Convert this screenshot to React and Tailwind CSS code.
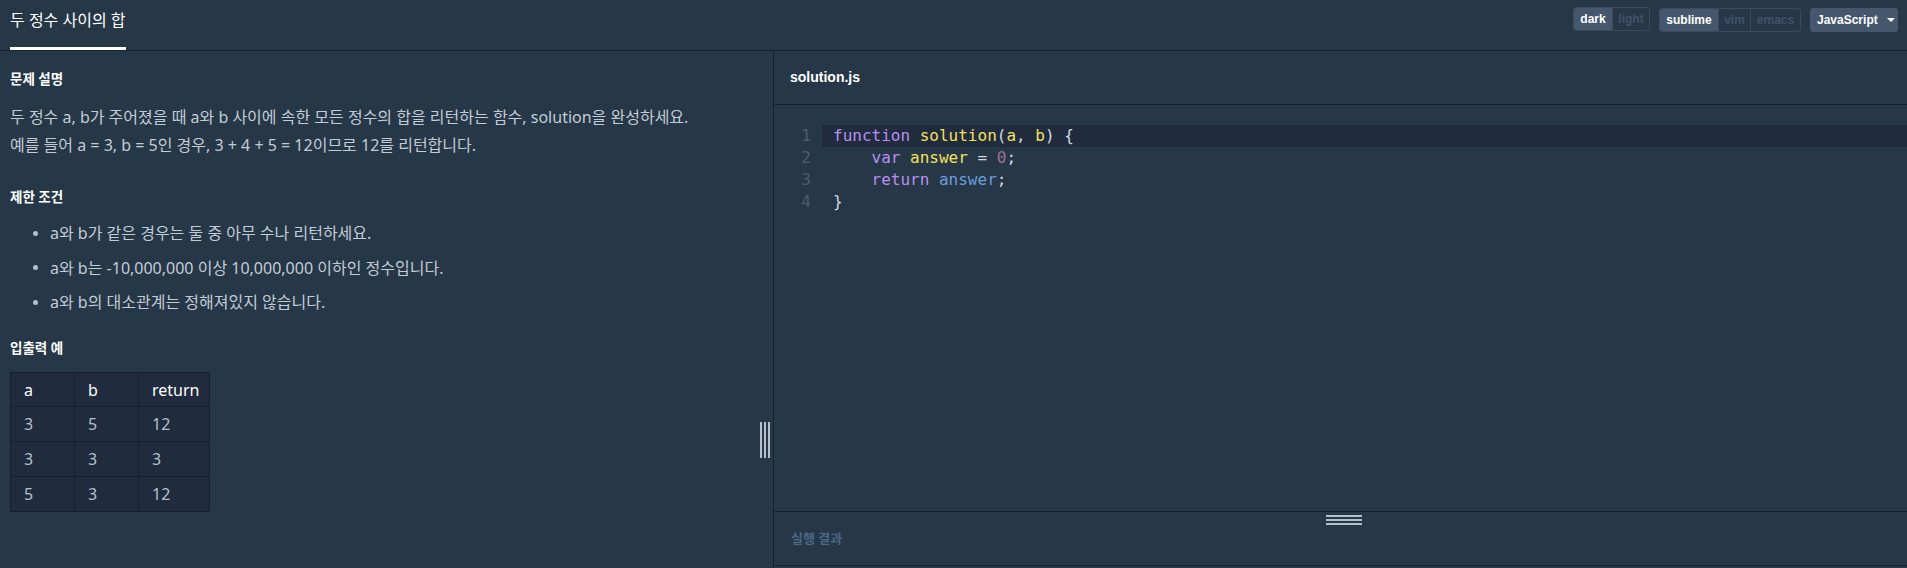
import React from "react";

const KR = { fontFamily: '"Noto Sans", "Noto Sans CJK KR", sans-serif' };
const UI = { fontFamily: '"Liberation Sans", Arial, "Noto Sans CJK KR", sans-serif' };
const MONO = { fontFamily: '"DejaVu Sans Mono", "Liberation Mono", monospace' };

const rules = [
  "a와 b가 같은 경우는 둘 중 아무 수나 리턴하세요.",
  "a와 b는 -10,000,000 이상 10,000,000 이하인 정수입니다.",
  "a와 b의 대소관계는 정해져있지 않습니다.",
];

const rows = [
  ["3", "5", "12"],
  ["3", "3", "3"],
  ["5", "3", "12"],
];

const Segmented = ({ items }) => (
  <div className="flex h-[24px] rounded-[3px] border border-[#3a4b5d] overflow-hidden" style={UI}>
    {items.map((it) => (
      <div
        key={it.label}
        className={
          "flex items-center justify-center text-[12px] font-bold " +
          (it.active
            ? "bg-[#44576c] text-white"
            : "text-[#3f5367] border-l border-[#3a4b5d]")
        }
        style={{ width: it.w }}
      >
        {it.label}
      </div>
    ))}
  </div>
);

export default function App() {
  return (
    <div className="w-full h-[568px] flex flex-col bg-[#263747] overflow-hidden">
      {/* Top bar */}
      <div className="h-[51px] shrink-0 flex justify-between border-b border-[#172030]">
        <div className="ml-[10px] h-full flex flex-col">
          <div className="pt-[8px] leading-[24px] text-[16px] text-white" style={KR}>
            두 정수 사이의 합
          </div>
          <div className="mt-auto h-[3px] bg-white" />
        </div>
        <div className="flex items-start pt-[7px] pr-[9px] gap-[9px]">
          <Segmented
            items={[
              { label: "dark", active: true, w: 38 },
              { label: "light", w: 37 },
            ]}
          />
          <div className="mt-[1px]">
            <Segmented
              items={[
                { label: "sublime", active: true, w: 58 },
                { label: "vim", w: 32 },
                { label: "emacs", w: 50 },
              ]}
            />
          </div>
          <div
            className="mt-[1px] h-[24px] w-[88px] rounded-[3px] bg-[#44576c] flex items-center pl-[7px] gap-[9px] text-[12px] font-bold text-white"
            style={UI}
          >
            JavaScript
            <span className="w-0 h-0 border-l-[4px] border-r-[4px] border-t-[4px] border-l-transparent border-r-transparent border-t-white" />
          </div>
        </div>
      </div>

      <div className="flex flex-1 min-h-0">
        {/* Left: description */}
        <div className="relative w-[774px] shrink-0 border-r border-[#172030] px-[10px] pt-[18px]" style={KR}>
          <h3 className="text-[13.5px] leading-[20px] font-bold text-white">문제 설명</h3>
          <p className="mt-[14px] text-[16px] leading-[28px] text-[#c2ccd6]">
            두 정수 a, b가 주어졌을 때 a와 b 사이에 속한 모든 정수의 합을 리턴하는 함수, solution을 완성하세요.
            <br />
            예를 들어 a = 3, b = 5인 경우, 3 + 4 + 5 = 12이므로 12를 리턴합니다.
          </p>

          <h3 className="mt-[28px] text-[13.5px] leading-[20px] font-bold text-white">제한 조건</h3>
          <ul className="mt-[12px] flex flex-col gap-[6.5px]">
            {rules.map((r) => (
              <li key={r} className="flex items-center h-[28px] text-[16px] text-[#c2ccd6]">
                <span className="ml-[23px] w-[5px] h-[5px] rounded-full bg-[#b2c0cc]" />
                <span className="ml-[12px]">{r}</span>
              </li>
            ))}
          </ul>

          <h3 className="mt-[22px] text-[13.5px] leading-[20px] font-bold text-white">입출력 예</h3>
          <table className="mt-[14px] border-collapse bg-[#202b3d] text-[16px]">
            <thead>
              <tr className="h-[34px]">
                {["a", "b", "return"].map((h, i) => (
                  <th
                    key={h}
                    className={
                      "border border-[#172030] text-left font-normal text-white pl-[13px] " +
                      (i === 2 ? "w-[71px]" : "w-[64px]")
                    }
                  >
                    {h}
                  </th>
                ))}
              </tr>
            </thead>
            <tbody>
              {rows.map((row, ri) => (
                <tr key={ri} className="h-[35px]">
                  {row.map((c, ci) => (
                    <td key={ci} className="border border-[#172030] pl-[13px] text-[#b2c0cc]">
                      {c}
                    </td>
                  ))}
                </tr>
              ))}
            </tbody>
          </table>

          {/* vertical resize handle */}
          <div className="absolute left-[760px] top-[371px] flex gap-[2px]">
            <span className="w-[2px] h-[36px] bg-[#b4c1cc]" />
            <span className="w-[2px] h-[36px] bg-[#b4c1cc]" />
            <span className="w-[2px] h-[36px] bg-[#b4c1cc]" />
          </div>
        </div>

        {/* Right: editor */}
        <div className="flex-1 flex flex-col min-w-0">
          <div className="h-[54px] shrink-0 border-b border-[#172030] flex items-center pl-[16px]">
            <span className="text-[14px] font-bold text-white" style={UI}>solution.js</span>
          </div>

          <div className="flex-1 pt-[20px] text-[16px] leading-[22px]" style={MONO}>
            <div className="flex">
              <div className="w-[37px] text-right text-[#4b5e72] select-none">1</div>
              <div className="ml-[11px] flex-1 bg-[#202b3d] pl-[11px] whitespace-pre text-[#d3dae1]">
                <span className="text-[#b98ff0]">function</span>{" "}
                <span className="text-[#f5e05d]">solution</span>(
                <span className="text-[#f5e05d]">a</span>,{" "}
                <span className="text-[#f5e05d]">b</span>) {"{"}
              </div>
            </div>
            <div className="flex">
              <div className="w-[37px] text-right text-[#4b5e72]">2</div>
              <div className="ml-[11px] pl-[11px] whitespace-pre text-[#d3dae1]">
                {"    "}
                <span className="text-[#b98ff0]">var</span>{" "}
                <span className="text-[#f5e05d]">answer</span> = <span className="text-[#9c6f97]">0</span>;
              </div>
            </div>
            <div className="flex">
              <div className="w-[37px] text-right text-[#4b5e72]">3</div>
              <div className="ml-[11px] pl-[11px] whitespace-pre text-[#d3dae1]">
                {"    "}
                <span className="text-[#b98ff0]">return</span>{" "}
                <span className="text-[#6d9edb]">answer</span>;
              </div>
            </div>
            <div className="flex">
              <div className="w-[37px] text-right text-[#4b5e72]">4</div>
              <div className="ml-[11px] pl-[11px] whitespace-pre text-[#d3dae1]">{"}"}</div>
            </div>
          </div>

          <div className="relative h-[55px] shrink-0 border-t border-b border-[#172030] flex items-center pl-[17px]">
            <span className="text-[13px] font-bold text-[#4a6786]" style={KR}>실행 결과</span>
            {/* horizontal resize handle */}
            <div className="absolute left-[552px] top-[3px] flex flex-col gap-[2px]">
              <span className="w-[36px] h-[2px] bg-[#b4c1cc]" />
              <span className="w-[36px] h-[2px] bg-[#b4c1cc]" />
              <span className="w-[36px] h-[2px] bg-[#b4c1cc]" />
            </div>
          </div>
          <div className="h-[2px] shrink-0" />
        </div>
      </div>
    </div>
  );
}
